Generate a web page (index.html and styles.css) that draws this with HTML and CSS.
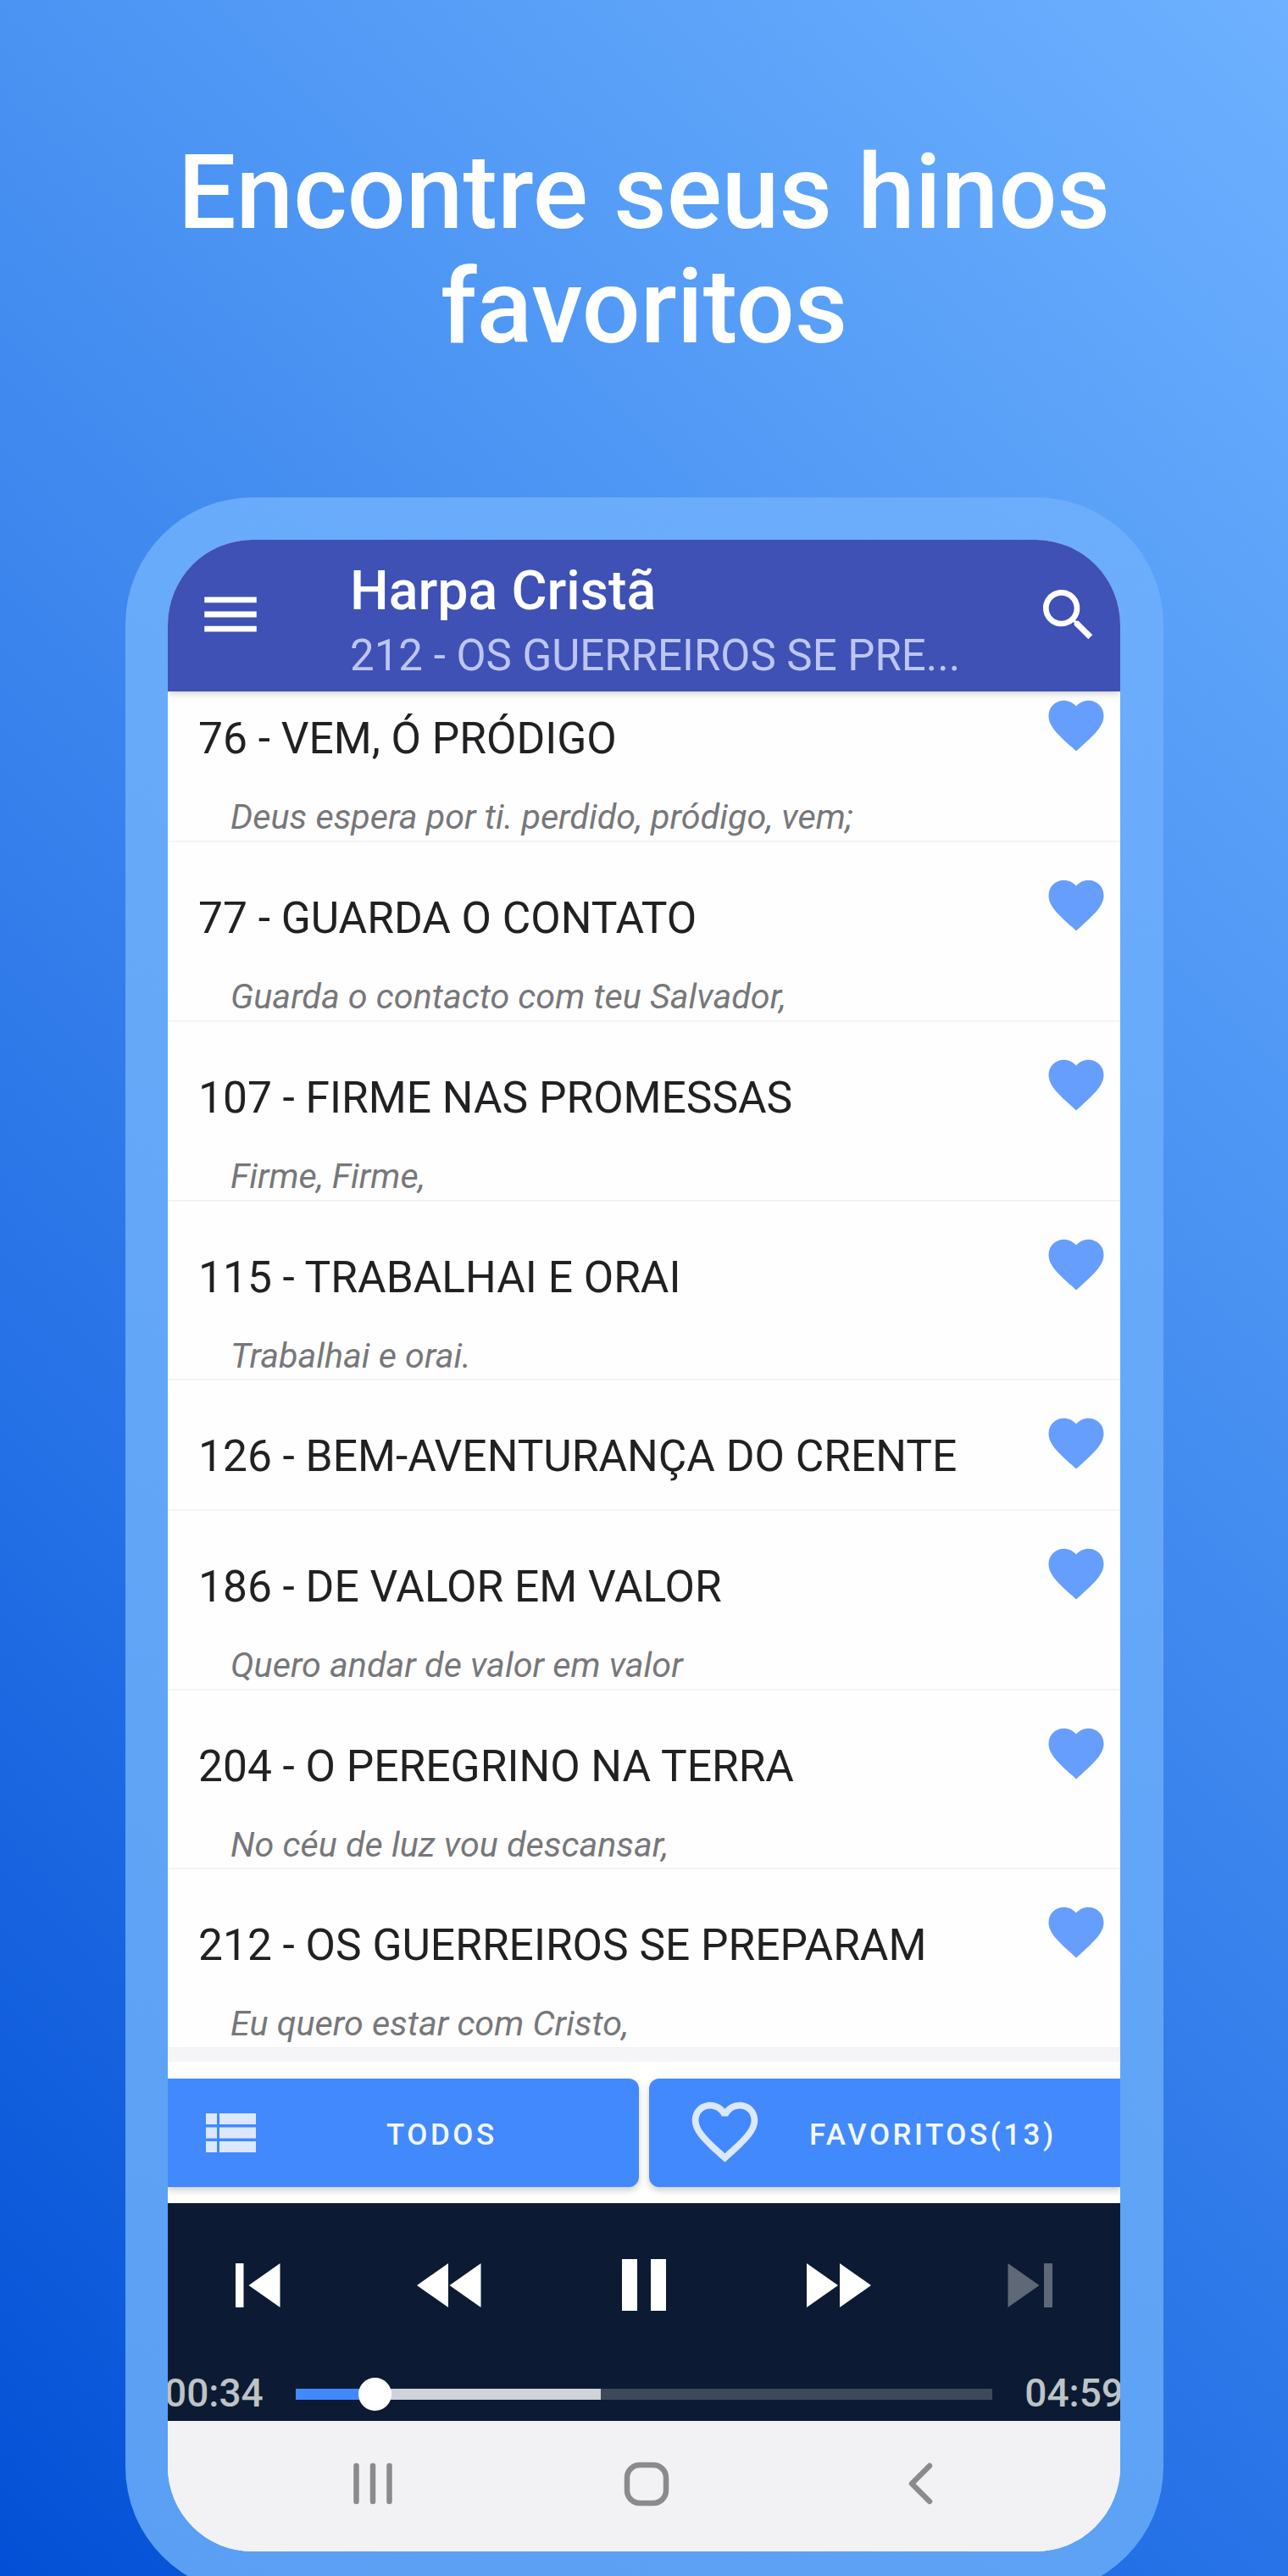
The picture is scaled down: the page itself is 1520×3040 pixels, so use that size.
FILE: index.html
```html
<!DOCTYPE html>
<html lang="pt-BR">

<head>
  <meta charset="UTF-8" />
  <meta name="viewport" content="width=device-width, initial-scale=1.0" />
  <title>Harpa Cristã</title>
  <link rel="stylesheet" href="styles.css">
</head>

<body>
  <svg class="sprite" aria-hidden="true">
    <symbol id="heart" viewBox="0 0 24 24">
      <path d="M12 21.35l-1.45-1.32C5.4 15.36 2 12.28 2 8.5 2 5.42 4.42 3 7.5 3c1.74 0 3.41.81 4.5 2.09C13.09 3.81 14.76 3 16.5 3 19.58 3 22 5.42 22 8.5c0 3.78-3.4 6.86-8.55 11.54L12 21.35z" />
    </symbol>
  </svg>

  <h1 class="headline">Encontre seus hinos<br>favoritos</h1>

  <div class="phone">
    <div class="screen">
      <header class="app-bar">
        <svg class="menu-icon" viewBox="0 0 24 24"><path d="M3 18h18v-2H3v2zm0-5h18v-2H3v2zm0-7v2h18V6H3z" /></svg>
        <div class="app-titles">
          <p class="app-title">Harpa Cristã</p>
          <p class="app-subtitle">212 - OS GUERREIROS SE PRE...</p>
        </div>
        <svg class="search-icon" viewBox="0 0 24 24"><path d="M15.5 14h-.79l-.28-.27C15.41 12.59 16 11.11 16 9.5 16 5.91 13.09 3 9.5 3S3 5.91 3 9.5 5.91 16 9.5 16c1.61 0 3.09-.59 4.23-1.57l.27.28v.79l5 4.99L20.49 19l-4.99-5zm-6 0C7.01 14 5 11.99 5 9.5S7.01 5 9.5 5 14 7.01 14 9.5 11.99 14 9.5 14z" /></svg>
      </header>

      <ul class="hymns">
        <li class="hymn first">
          <h2>76 - VEM, Ó PRÓDIGO</h2>
          <p>Deus espera por ti. perdido, pródigo, vem;</p>
          <svg class="fav"><use href="#heart" /></svg>
        </li>
        <li class="hymn">
          <h2>77 - GUARDA O CONTATO</h2>
          <p>Guarda o contacto com teu Salvador,</p>
          <svg class="fav"><use href="#heart" /></svg>
        </li>
        <li class="hymn">
          <h2>107 - FIRME NAS PROMESSAS</h2>
          <p>Firme, Firme,</p>
          <svg class="fav"><use href="#heart" /></svg>
        </li>
        <li class="hymn">
          <h2>115 - TRABALHAI E ORAI</h2>
          <p>Trabalhai e orai.</p>
          <svg class="fav"><use href="#heart" /></svg>
        </li>
        <li class="hymn short">
          <h2>126 - BEM-AVENTURANÇA DO CRENTE</h2>
          <svg class="fav"><use href="#heart" /></svg>
        </li>
        <li class="hymn">
          <h2>186 - DE VALOR EM VALOR</h2>
          <p>Quero andar de valor em valor</p>
          <svg class="fav"><use href="#heart" /></svg>
        </li>
        <li class="hymn">
          <h2>204 - O PEREGRINO NA TERRA</h2>
          <p>No céu de luz vou descansar,</p>
          <svg class="fav"><use href="#heart" /></svg>
        </li>
        <li class="hymn">
          <h2>212 - OS GUERREIROS SE PREPARAM</h2>
          <p>Eu quero estar com Cristo,</p>
          <svg class="fav"><use href="#heart" /></svg>
        </li>
      </ul>

      <div class="tabs">
        <button class="tab tab-all">
          <svg class="list-icon" viewBox="0 0 59 46"><path d="M0 0h13v13H0zM16 0h43v13H16zM0 16.5h13v13H0zM16 16.5h43v13H16zM0 33h13v13H0zM16 33h43v13H16z" /></svg>
          <span>TODOS</span>
        </button>
        <button class="tab tab-fav">
          <svg class="outline-icon" viewBox="0 0 24 24"><path d="M16.5 3c-1.74 0-3.41.81-4.5 2.09C10.91 3.81 9.24 3 7.5 3 4.42 3 2 5.42 2 8.5c0 3.78 3.4 6.86 8.55 11.54L12 21.35l1.45-1.32C18.6 15.36 22 12.28 22 8.5 22 5.42 19.58 3 16.5 3zm-4.4 15.55l-.1.1-.1-.1C7.14 14.24 4 11.39 4 8.5 4 6.5 5.5 5 7.5 5c1.54 0 3.04.99 3.57 2.36h1.87C13.46 5.99 14.96 5 16.5 5c2 0 3.5 1.5 3.5 3.5 0 2.89-3.14 5.74-7.9 10.05z" /></svg>
          <span>FAVORITOS(13)</span>
        </button>
      </div>

      <div class="player">
        <div class="controls">
          <svg viewBox="0 0 80 62"><path d="M14 5h9.5v52H14zM66.5 5v52L29.5 31z" /></svg>
          <svg viewBox="0 0 80 62"><path d="M37 5v52L0 31zM75.5 5v52L38.5 31z" /></svg>
          <svg viewBox="0 0 80 62"><path d="M14 0h18v61H14zM48 0h18v61H48z" /></svg>
          <svg viewBox="0 0 80 62"><path d="M4 5v52l37-26zM43 5v52l37-26z" /></svg>
          <svg class="disabled" viewBox="0 0 80 62"><path d="M13.5 5v52l37-26zM56 5h10v52H56z" /></svg>
        </div>
        <div class="timeline">
          <span class="time">00:34</span>
          <div class="track">
            <div class="buffered"></div>
            <div class="played"></div>
            <div class="thumb"></div>
          </div>
          <span class="time">04:59</span>
        </div>
      </div>

      <nav class="system-nav">
        <svg viewBox="0 0 60 60"><path d="M10.5 9v42M30 9v42M49.5 9v42" /></svg>
        <svg viewBox="0 0 60 60"><rect x="7" y="8" width="46" height="45" rx="15" /></svg>
        <svg viewBox="0 0 60 60"><path d="M41 9L20 30l21 21" /></svg>
      </nav>
    </div>
  </div>
</body>

</html>
```
FILE: styles.css
```css
* {
  box-sizing: border-box;
}

body {
  margin: 0;
  height: 3040px;
  overflow: hidden;
  background: linear-gradient(225deg, #6db1ff 0%, #4b94f3 33%, #2571e6 69%, #0350d6 100%);
  font-family: Roboto, sans-serif;
}

h1,
h2,
p,
ul {
  margin: 0;
  padding: 0;
  font-weight: 400;
}

.sprite {
  display: none;
}

.headline {
  padding-top: 160px;
  height: 587px;
  color: white;
  font-size: 121.6px;
  font-weight: 500;
  line-height: 135px;
  text-align: center;
}

.phone {
  width: 1225px;
  height: 2474px;
  margin-left: 148px;
  padding: 50px 51px 50px 50px;
  border-radius: 150px;
  background: linear-gradient(205deg, #6caefc, #5a9ff3);
}

.screen {
  display: flex;
  flex-direction: column;
  height: 2374px;
  border-radius: 100px;
  overflow: hidden;
  background-color: white;
}

/* top bar */
.app-bar {
  display: flex;
  flex: none;
  position: relative;
  z-index: 1;
  height: 179px;
  background-color: #3f51b5;
  box-shadow: 0 2px 8px rgba(0, 0, 0, 0.2);
  fill: white;
}

.menu-icon {
  width: 82px;
  height: 82px;
  margin: 47px 0 0 33px;
}

.app-titles {
  margin-left: 100px;
  padding-top: 21px;
  width: 803px;
  white-space: nowrap;
}

.app-title {
  color: white;
  font-size: 64.5px;
  font-weight: 500;
  line-height: 78px;
}

.app-subtitle {
  color: #bdc6f3;
  font-size: 51px;
  line-height: 76px;
}

.search-icon {
  width: 80px;
  height: 80px;
  margin: 49px 0 0 5px;
}

/* hymn list */
.hymns {
  flex: none;
  height: 1617px;
  background-color: #f5f5f7;
  list-style: none;
}

.hymn {
  position: relative;
  height: 211.8px;
  padding: 60px 0 0 36px;
  border-bottom: 2px solid #f3f3f5;
  background-color: #fefefe;
  white-space: nowrap;
}

.hymn.first {
  height: 178px;
  padding-top: 26px;
}

.hymn.short {
  height: 153.5px;
}

.hymn h2 {
  color: #212123;
  font-size: 51.5px;
  line-height: 60px;
}

.hymn p {
  margin: 37px 0 0 38px;
  color: #77777a;
  font-size: 41.3px;
  font-style: italic;
  line-height: 50px;
}

.fav {
  position: absolute;
  top: 35px;
  right: 13px;
  width: 78px;
  height: 78px;
  fill: #669efd;
}

.first .fav {
  top: 1px;
}

/* todos / favoritos */
.tabs {
  display: flex;
  flex: none;
  gap: 12px;
  height: 167px;
  padding: 20px 0 19px;
  background-color: #fffffd;
}

.tab {
  display: flex;
  align-items: center;
  flex: 1;
  padding: 0;
  border: 0;
  background-color: #4289fe;
  box-shadow: 0 4px 8px rgba(0, 0, 0, 0.2);
  color: #f4f9ff;
  fill: #dce8fd;
  font-family: inherit;
  font-size: 35px;
  font-weight: 500;
  letter-spacing: 3.5px;
}

.tab span {
  padding-top: 4px;
}

.tab-all {
  border-radius: 0 12px 12px 0;
}

.tab-fav {
  border-radius: 12px 0 0 12px;
}

.list-icon {
  width: 59px;
  height: 46px;
  margin: 0 154px 0 45px;
}

.outline-icon {
  width: 93px;
  height: 93px;
  margin: 0 53px 4px 43px;
}

/* audio player */
.player {
  flex: none;
  height: 257px;
  background-color: #0c1b33;
}

.controls {
  display: flex;
  justify-content: space-between;
  padding: 66px 66px 0;
}

.controls svg {
  width: 80px;
  height: 62px;
  fill: white;
}

.controls .disabled {
  fill: #5e6877;
}

.timeline {
  display: flex;
  align-items: center;
  justify-content: space-between;
  height: 60px;
  margin: 67px -4px 0;
}

.time {
  padding-bottom: 2px;
  color: #bdc3c6;
  font-size: 46px;
  font-weight: 500;
}

.track {
  position: relative;
  width: 822px;
  height: 13px;
  background-color: #3d4858;
}

.buffered,
.played {
  position: absolute;
  width: 360px;
  height: 13px;
  background-color: #d0d4da;
}

.played {
  width: 93px;
  background-color: #4289fe;
}

.thumb {
  position: absolute;
  top: -13px;
  left: 74px;
  width: 39px;
  height: 39px;
  border-radius: 50%;
  background-color: white;
}

/* android buttons */
.system-nav {
  display: flex;
  flex: 1;
  justify-content: center;
  gap: 263px;
  padding: 44px 0 0 6px;
  background-color: #f2f1f4;
}

.system-nav svg {
  width: 60px;
  height: 60px;
  fill: none;
  stroke: #8b8a8e;
  stroke-width: 6.5;
  stroke-linecap: round;
  stroke-linejoin: round;
}
```
